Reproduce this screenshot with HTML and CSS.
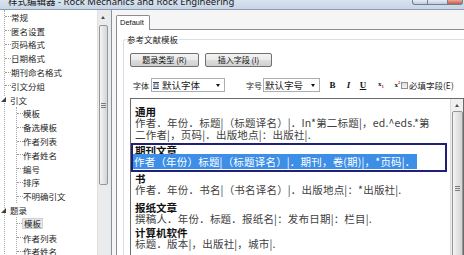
FILE: index.html
```html
<!DOCTYPE html>
<html lang="zh-CN">
<head>
<meta charset="utf-8">
<title>样式编辑器</title>
<link rel="stylesheet" href="styles.css">
</head>
<body>
<div class="window">
  <header class="titlebar">
    <span class="title">样式编辑器 - Rock Mechanics and Rock Engineering</span>
    <div class="winctl">
      <span class="wbtn first"></span><span class="wbtn wide"></span><span class="wbtn close"></span>
    </div>
  </header>
  <div class="main">
    <aside class="tree">
      <div class="tree-list">
        <div class="branch">
          <div class="row"><span class="tick"></span>常规</div>
          <div class="row"><span class="tick"></span>匿名设置</div>
          <div class="row"><span class="tick"></span>页码格式</div>
          <div class="row"><span class="tick"></span>日期格式</div>
          <div class="row"><span class="tick"></span>期刊命名格式</div>
          <div class="row"><span class="tick"></span>引文分组</div>
          <div class="row"><svg class="expander" viewBox="0 0 5 5"><polygon points="5,0 5,5 0,5" fill="#404040"/></svg>引文</div>
          <div class="children">
            <div class="row"><span class="tick"></span>模板</div>
            <div class="row"><span class="tick"></span>备选模板</div>
            <div class="row"><span class="tick"></span>作者列表</div>
            <div class="row"><span class="tick"></span>作者姓名</div>
            <div class="row"><span class="tick"></span>编号</div>
            <div class="row"><span class="tick"></span>排序</div>
            <div class="row"><span class="tick"></span>不明确引文</div>
          </div>
          <div class="row"><svg class="expander" viewBox="0 0 5 5"><polygon points="5,0 5,5 0,5" fill="#404040"/></svg>题录</div>
          <div class="children">
            <div class="row"><span class="tick short"></span><span class="sel">模板</span></div>
            <div class="row"><span class="tick"></span>作者列表</div>
            <div class="row"><span class="tick"></span>作者姓名</div>
          </div>
        </div>
      </div>
      <div class="vscroll">
        <div class="sb-up"></div>
        <div class="thumb tall"><span class="grip"></span></div>
      </div>
    </aside>
    <section class="pane">
      <div class="tabstrip">
        <div class="tab">Default</div>
        <div class="tab-fill"></div>
      </div>
      <div class="tabpage">
        <div class="group">
          <div class="legend">参考文献模板</div>
          <div class="btnrow">
            <button class="btn b1">题录类型 (R)</button>
            <button class="btn b2">插入字段 (I)</button>
          </div>
          <div class="fontrow">
            <span class="lbl">字体</span>
            <div class="combo font">
              <svg class="ficon" viewBox="0 0 6 7"><rect x="0" y="0" width="6" height="1" fill="#3a4a66"/><rect x="1" y="2" width="4" height="3" fill="none" stroke="#3a4a66" stroke-width="0.9"/><rect x="0" y="6" width="6" height="1" fill="#3a4a66"/></svg>
              <span class="ctext">默认字体</span>
              <span class="caret"></span>
            </div>
            <span class="lbl lbl2">字号</span>
            <div class="combo size">
              <span class="ctext">默认字号</span>
              <span class="caret"></span>
            </div>
            <span class="fmt fb">B</span>
            <span class="fmt fi">I</span>
            <span class="fmt fu">U</span>
            <span class="fmt fsub">x<sub>1</sub></span>
            <span class="fmt fsup">x<sup>2</sup></span>
            <span class="check"></span>
            <span class="clbl">必填字段(E)</span>
          </div>
          <div class="editor">
            <div class="content">
              <div class="entry">
                <div class="etitle">通用</div>
                <div class="etext">作者．年份．标题|（标题译名）|．In*第二标题|，ed.^eds.*第<br>二作者|，页码|．出版地点|：出版社|.</div>
              </div>
              <div class="entry selected">
                <div class="etitle">期刊文章</div>
                <div class="etext"><span class="hl">作者（年份）标题|（标题译名）|．期刊，卷(期)|，*页码|．</span></div>
              </div>
              <div class="entry e3">
                <div class="etitle">书</div>
                <div class="etext">作者．年份．书名|（书名译名）|．出版地点|：*出版社|.</div>
              </div>
              <div class="entry e4">
                <div class="etitle">报纸文章</div>
                <div class="etext">撰稿人．年份．标题．报纸名|：发布日期|：栏目|.</div>
              </div>
              <div class="entry e5">
                <div class="etitle">计算机软件</div>
                <div class="etext">标题．版本|，出版社|，城市|.</div>
              </div>
            </div>
            <div class="vscroll escroll">
              <div class="sb-up"></div>
              <div class="thumb long"><span class="grip"></span></div>
            </div>
          </div>
        </div>
      </div>
    </section>
  </div>
</div>
</body>
</html>
```

FILE: styles.css
```css
* { box-sizing: border-box; }
html, body { margin: 0; padding: 0; }
body {
  width: 464px;
  height: 255px;
  overflow: hidden;
  background: #e6ebf1;
  font-family: "Noto Sans CJK SC", "Noto Sans", sans-serif;
  color: #1b1b1b;
}
.window { display: flex; flex-direction: column; height: 255px; }

/* title bar */
.titlebar {
  height: 10px;
  flex: none;
  display: flex;
  background: linear-gradient(#d8e3ef, #c7d5e5);
  border-bottom: 1px solid #8c9db2;
  overflow: hidden;
}
.title {
  font-family: "Noto Sans", "Noto Sans CJK SC", sans-serif;
  font-size: 9.5px;
  line-height: 10px;
  margin: -3px 0 0 8px;
  color: #1a1a1a;
  white-space: nowrap;
}
.winctl { margin-left: auto; margin-right: 1px; display: flex; height: 5px; }
.wbtn {
  width: 16px;
  height: 5px;
  border: 1px solid #6f7f95;
  border-top: none;
  background: linear-gradient(#e6edf5, #c0ccdb);
}
.wbtn.first { border-radius: 0 0 0 3px; }
.wbtn.wide { width: 20px; border-left: none; }
.wbtn.close {
  width: 15px;
  border-left: none;
  background: linear-gradient(#e9a896, #c65a41);
  border-radius: 0 0 3px 0;
}

/* main */
.main { flex: 1; display: flex; min-height: 0; }

/* tree */
.tree { width: 108px; flex: none; display: flex; background: #fff; }
.tree-list { flex: 1; font-size: 8.5px; overflow: hidden; color: #1e1e1e; }
.branch { margin-left: 4px; border-left: 1px dotted #a8a8a8; }
.row {
  height: 13.8px;
  display: flex;
  align-items: center;
  white-space: nowrap;
}
.tick { width: 6px; flex: none; border-top: 1px dotted #9a9a9a; }
.tick.short { width: 5px; }
.expander {
  width: 5px;
  height: 5px;
  flex: none;
  margin-left: -4px;
  margin-right: 4px;
  background: #fff;
}
.children { margin-left: 11px; border-left: 1px dotted #a8a8a8; }
.sel {
  background: #e7e7e7;
  border: 1px solid #d2d2d2;
  line-height: 9px;
  padding: 0 1px;
}

/* scrollbars */
.vscroll {
  width: 11px;
  flex: none;
  background: #ebebeb;
  border-left: 1px solid #e0e0e0;
  display: flex;
  flex-direction: column;
  align-items: center;
}
.sb-up {
  height: 14px;
  width: 100%;
  display: flex;
  align-items: center;
  justify-content: center;
}
.sb-up::before {
  content: "";
  border-left: 2.5px solid transparent;
  border-right: 2.5px solid transparent;
  border-bottom: 3px solid #4d4d4d;
}
.thumb {
  margin-top: 1px;
  width: 9px;
  flex: none;
  border: 1px solid #969696;
  border-radius: 2px;
  background: linear-gradient(90deg, #f5f5f5, #e4e4e4 50%, #d4d4d4);
  display: flex;
  align-items: center;
  justify-content: center;
}
.thumb.tall { height: 160px; }
.grip {
  width: 5px;
  height: 5px;
  background: repeating-linear-gradient(#7a7a7a 0 1px, transparent 1px 2px);
}
.escroll { width: 13px; border-left: 1px solid #dcdcdc; background: #f0f0f0; }
.escroll .sb-up { height: 10px; margin-top: 1px; }
.thumb.long { width: 11px; height: 155px; }

/* right pane */
.pane {
  flex: 1;
  min-width: 0;
  margin-left: 3px;
  border-left: 1px solid #8e8f8f;
  background: #f5f5f5;
  padding-left: 4px;
  display: flex;
  flex-direction: column;
}
.tabstrip { height: 20px; flex: none; display: flex; align-items: flex-end; }
.tab {
  width: 34px;
  height: 15px;
  border: 1px solid #898c95;
  border-bottom: none;
  border-radius: 2px 2px 0 0;
  background: #fff;
  font-family: "Liberation Sans", "Noto Sans", sans-serif;
  font-size: 7.5px;
  line-height: 14px;
  padding-left: 3px;
  color: #111;
}
.tab-fill { flex: 1; align-self: stretch; border-bottom: 1px solid #898c95; }
.tabpage {
  flex: 1;
  background: #fff;
  border-left: 1px solid #898c95;
  padding-left: 6px;
  overflow: hidden;
}
.group {
  margin-top: 9px;
  height: 300px;
  border-top: 1px solid #d5dfe5;
  border-left: 1px solid #d5dfe5;
  border-top-left-radius: 3px;
}
.legend {
  width: max-content;
  margin: -6px 0 0 2px;
  padding: 0 1px;
  background: #fff;
  font-size: 8.5px;
  line-height: 11px;
  color: #1e1e1e;
}
.btnrow { display: flex; gap: 6px; margin: 8px 0 0 6px; }
.btn {
  height: 14px;
  padding: 0;
  border: 1px solid #707070;
  border-radius: 2px;
  background: linear-gradient(#f3f3f3, #ebebeb 48%, #dddddd 52%, #cfcfcf);
  font-family: "Noto Sans CJK SC", sans-serif;
  font-size: 8px;
  line-height: 12px;
  color: #111;
}
.b1 { width: 69px; }
.b2 { width: 67px; }

.fontrow {
  display: flex;
  align-items: center;
  height: 14px;
  margin: 11px 0 0 9px;
  font-size: 8px;
  white-space: nowrap;
}
.lbl { width: 16px; color: #1e1e1e; }
.lbl2 { margin-left: 21px; }
.combo {
  height: 14px;
  border: 1px solid #abadb3;
  background: #fff;
  display: flex;
  align-items: center;
  font-size: 9.5px;
  color: #1a1a1a;
}
.combo.font { width: 74px; margin-left: 2px; }
.combo.size { width: 57px; margin-left: 1px; }
.ficon { width: 6px; height: 7px; margin-left: 1px; flex: none; }
.combo.font .ctext { margin-left: 3px; }
.combo.size .ctext { margin-left: 1px; }
.caret {
  margin-left: auto;
  margin-right: 4px;
  border-left: 2.5px solid transparent;
  border-right: 2.5px solid transparent;
  border-top: 3px solid #111;
}
.fmt {
  font-family: "Liberation Serif", serif;
  font-weight: bold;
  font-size: 9px;
  text-align: center;
  color: #111;
}
.fb { width: 7px; margin-left: 9px; }
.fi { width: 7px; margin-left: 9px; font-style: italic; }
.fu { width: 8px; margin-left: 7px; text-decoration: underline; }
.fsub { width: 8px; margin-left: 10px; font-size: 7px; }
.fsup { width: 7px; margin-left: 9px; font-size: 7px; }
.fmt sub, .fmt sup { font-size: 5px; color: #d22; }
.check {
  width: 7px;
  height: 7px;
  border: 1px solid #8f8f8f;
  background: linear-gradient(#dcdcdc, #f4f4f4);
}
.clbl { margin-left: 1px; font-size: 8.5px; color: #1e1e1e; }

/* editor */
.editor {
  margin: 6px 0 0 6px;
  width: 334px;
  height: 170px;
  border: 1px solid #6b6b6b;
  display: flex;
  background: #fff;
}
.content { flex: 1; padding-top: 7px; font-size: 10.5px; white-space: nowrap; overflow: hidden; }
.entry { padding: 0 4px; }
.etitle { font-weight: bold; line-height: 11px; color: #111; }
.etext { line-height: 12px; color: #404040; letter-spacing: 0.2px; }
.entry.selected {
  margin: 2px 3px 0 0;
  padding: 0 2px 2px 2px;
  border: 2px solid #20207a;
}
.hl { background: #3c8ee6; color: #fff; padding: 0 1px; margin-left: -2px; }
.e3 { margin-top: 1px; }
.e4 { margin-top: 6px; }
.e5 { margin-top: 2px; }
```
